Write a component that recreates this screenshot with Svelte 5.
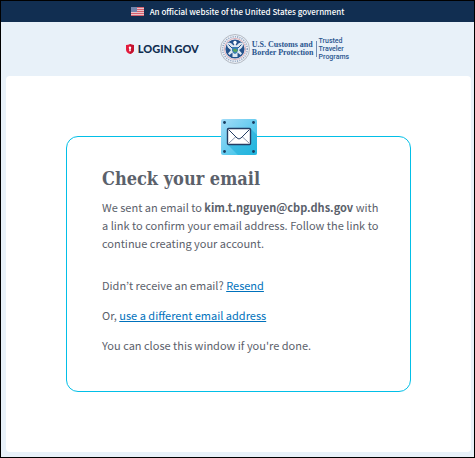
<script lang="ts">
	type Props = {
		email?: string;
	};

	let { email = 'kim.t.nguyen@cbp.dhs.gov' }: Props = $props();

	const stripes = [0, 2, 4, 6, 8];
	const screws = [
		[3.5, 3.5],
		[32.5, 3.5],
		[3.5, 32.5],
		[32.5, 32.5]
	];
</script>

<div class="page">
	<div class="banner">
		<svg class="flag" width="13" height="9" viewBox="0 0 13 9" aria-hidden="true">
			<rect width="13" height="9" fill="#e9c3ca" />
			{#each stripes as y}
				<rect {y} width="13" height="1" fill="#d4606e" />
			{/each}
			<rect width="6" height="5" fill="#7284ad" />
		</svg>
		<span>An official website of the United States government</span>
	</div>

	<header class="header">
		<div class="login-logo">
			<svg width="8" height="10" viewBox="0 0 8 10" aria-hidden="true">
				<path d="M0 1Q2.200 1 4 0Q5.800 1 8 1V5.500Q8 8.500 4 10Q0 8.500 0 5.500Z" fill="#e21c3d" />
				<path d="M4 0Q5.800 1 8 1V5.500Q8 8.500 4 10Z" fill="#c4122f" />
				<circle cx="4" cy="3.700" r="1.200" fill="#fff" />
				<path d="M3.500 4H4.500L4.900 7.200H3.100Z" fill="#fff" />
			</svg>
			<span>LOGIN.GOV</span>
		</div>

		<div class="agency">
			<svg width="30" height="30" viewBox="0 0 30 30" aria-hidden="true">
				<circle cx="15" cy="15" r="14.500" fill="#e9eef4" stroke="#b4bac3" />
				<circle cx="15" cy="15" r="12.300" fill="none" stroke="#8fa4c0" stroke-width="1.600" stroke-dasharray="1 1.300" />
				<circle cx="15" cy="15" r="10.500" fill="#fff" stroke="#d08b96" stroke-width=".7" />
				<circle cx="15" cy="15" r="9.600" fill="#24538d" />
				<path d="M15 9L13.500 11.500Q10 7 6.800 9.500Q7 14 11 16L8 19.500L9.500 21L12.500 18.500L12.500 23H17.500L17.500 18.500L20.500 21L22 19.500L19 16Q23 14 23.200 9.500Q20 7 16.500 11.500Z" fill="#dde7f1" />
				<path d="M8.500 10.500L12.500 14.500M21.500 10.500L17.500 14.500" stroke="#24538d" />
				<circle cx="15" cy="8.500" r="1.700" fill="#fff" />
				<path d="M12 13H18V16.500Q17.500 19 15 20Q12.500 19 12 16.500Z" fill="#3b7db5" />
				<path d="M12.500 16L15 14.500L17.500 16V17L15 18.500Z" fill="#58a25c" />
			</svg>
			<div class="agency-name">U.S. Customs and<br />Border Protection</div>
			<div class="program">Trusted<br />Traveler<br />Programs</div>
		</div>
	</header>

	<main class="content">
		<section class="card">
			<svg class="mail" width="36" height="36" viewBox="0 0 36 36" aria-hidden="true">
				<defs>
					<linearGradient id="tile" x1="0" y1="0" x2="1" y2="1">
						<stop offset="0" stop-color="#a3dcf8" />
						<stop offset=".5" stop-color="#69ccef" />
						<stop offset="1" stop-color="#22c3e6" />
					</linearGradient>
				</defs>
				<rect width="36" height="36" rx="2" fill="url(#tile)" />
				<path d="M30 10L36 16V34Q36 36 34 36H17L7 26Z" fill="#20add8" opacity=".6" />
				{#each screws as [cx, cy]}
					<circle {cx} {cy} r="1.400" fill="#173e61" />
				{/each}
				<rect x="6.500" y="9.500" width="23" height="16" rx="1" fill="#fff" stroke="#243d63" stroke-width="1.400" />
				<path d="M7.500 24.500L15 17.500M28.500 24.500L21 17.500" fill="none" stroke="#8796ad" />
				<path d="M7.500 10.500L16 19Q18 21 20 19L28.500 10.500" fill="none" stroke="#243d63" />
			</svg>

			<h1>Check your email</h1>
			<p class="intro">
				We sent an email to <strong>{email}</strong> with a link to confirm your email address. Follow
				the link to continue creating your account.
			</p>
			<p>Didn’t receive an email? <a href="#resend">Resend</a></p>
			<p>Or, <a href="#change-email">use a different email address</a></p>
			<p>You can close this window if you're done.</p>
		</section>
	</main>
</div>

<style>
	:global(body) {
		margin: 0;
		background: #e8f1f9;
	}

	.page {
		min-height: 100vh;
		box-sizing: border-box;
		border: 1px solid #000;
		background: #e8f1f9;
		color: #5b616b;
		font-family: 'Noto Sans CJK KR', 'Noto Sans', sans-serif;
		font-size: 11px;
		line-height: 18px;
	}

	.banner {
		display: flex;
		align-items: center;
		justify-content: center;
		gap: 6px;
		height: 21px;
		background: #112e51;
		color: #fff;
		font-size: 8px;
		font-weight: 500;
	}

	.header {
		display: flex;
		align-items: center;
		justify-content: center;
		gap: 21px;
		height: 54px;
	}

	.login-logo {
		display: flex;
		align-items: center;
		gap: 4px;
		color: #112e51;
		font-family: Lato, sans-serif;
		font-size: 11px;
		font-weight: 900;
	}

	.agency {
		display: flex;
		align-items: center;
		gap: 2px;
		color: #2a568f;
	}

	.agency-name {
		padding-right: 2px;
		border-right: 1px solid #6e8db5;
		font-family: 'Liberation Serif', serif;
		font-size: 8px;
		font-weight: bold;
		line-height: 8px;
		white-space: nowrap;
	}

	.program {
		font-family: Roboto, sans-serif;
		font-size: 7px;
		font-weight: 500;
		line-height: 8px;
	}

	.content {
		margin: 0 3px 5px 5px;
		padding: 60px;
		border-radius: 4px;
		background: #fff;
	}

	.card {
		position: relative;
		padding: 28px 28px 37px 35px;
		border: 1px solid #02bfe7;
		border-radius: 12px;
	}

	.mail {
		position: absolute;
		top: -18px;
		left: 50%;
		transform: translateX(-50%);
	}

	h1 {
		margin: 0 0 6px;
		font-family: 'DejaVu Serif Condensed', 'DejaVu Serif', serif;
		font-size: 18px;
		line-height: 27px;
	}

	p {
		margin: 0 0 12px;
	}

	p:last-child {
		margin-bottom: 0;
	}

	.intro {
		margin-bottom: 24px;
	}

	a {
		color: #0071bc;
	}
</style>
